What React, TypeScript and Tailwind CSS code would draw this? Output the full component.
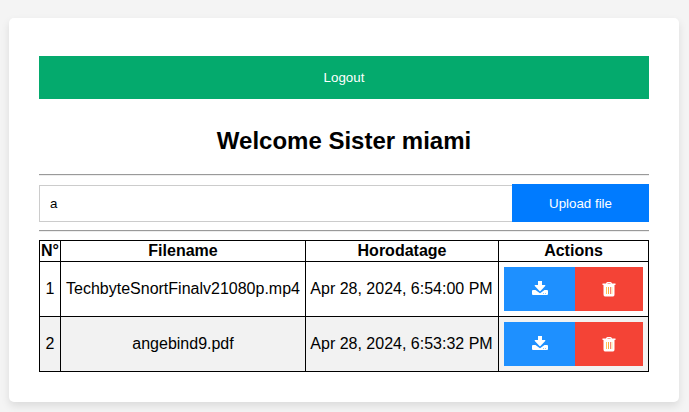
import React from "react";

interface FileRow {
  id: number;
  name: string;
  date: string;
}

const files: FileRow[] = [
  { id: 1, name: "TechbyteSnortFinalv21080p.mp4", date: "Apr 28, 2024, 6:54:00 PM" },
  { id: 2, name: "angebind9.pdf", date: "Apr 28, 2024, 6:53:32 PM" },
];

function DownloadIcon() {
  return (
    <svg viewBox="0 0 16 16" className="size-4" fill="currentColor" aria-hidden="true">
      <path d="M1 9h14q1 0 1 1v3q0 1-1 1H1q-1 0-1-1v-3q0-1 1-1z" />
      <path fill="#1e90ff" d="M3.500 9h9L8 12.200z" />
      <path d="M6 0h4v4h3q.7.3.2 1L8.500 10q-.5.5-1 0L2.800 5q-.5-.7.2-1h3z" />
      <path fill="#8fc8ff" d="M11 12h1v1h-1zM13 12h1v1h-1z" />
    </svg>
  );
}

function TrashIcon() {
  return (
    <svg viewBox="0 0 14 16" className="h-4 w-3.5" fill="currentColor" aria-hidden="true">
      <path d="M4 2.500Q4.200 1 5.500 1h3Q9.800 1 10 2.500h3.500V4H12.500v9.500Q12.500 15.500 11 15.500H3Q1.500 15.500 1.500 13.500V4H.5V2.500z" />
      <path fill="#f9877e" d="M5.500 2h3v.8h-3z" />
      <path fill="#ffc35c" d="M4 6h1v7H4z" />
      <path fill="#fbb03f" d="M6 6h1v7H6z" />
      <path fill="#f5837b" d="M8 6h1v7H8z" />
      <path fill="#ffd17b" d="M9.500 6h.8v7h-.8z" />
    </svg>
  );
}

function Divider() {
  return <hr className="h-0.5 border-0 border-t border-b border-t-[#9a9a9a] border-b-[#eeeeee]" />;
}

export default function App() {
  return (
    <div className="min-h-screen bg-[#f4f4f4] pt-[18px] pr-2.5 pb-2.5 pl-[9px] font-['Liberation_Sans',Arial,sans-serif] text-base text-black">
      <main className="h-[384px] rounded-[5px] bg-white px-[30px] pt-[38px] shadow-[0_4px_8px_rgba(0,0,0,0.1)]">
        <button className="block h-[43px] w-full bg-[#04aa6d] text-[13.333px] text-white">Logout</button>
        <h2 className="mt-[27px] mb-[19px] text-center text-2xl leading-[29px] font-bold">Welcome Sister miami</h2>
        <Divider />
        <form className="mt-2 mb-2 flex h-[38px] items-end" onSubmit={(e) => e.preventDefault()}>
          <input
            className="h-[37px] min-w-0 flex-1 border border-r-0 border-[#cccccc] bg-white px-2.5 text-[13.333px] outline-none"
            defaultValue="a"
            aria-label="File description"
          />
          <button className="h-[38px] w-[137px] bg-[#007bff] pt-0.5 text-[13.333px] text-white">Upload file</button>
        </form>
        <Divider />
        <table className="mt-2 w-full table-fixed border-separate border-spacing-0 border-t border-l border-black text-center leading-[18px]">
          <colgroup>
            <col className="w-[21px]" />
            <col className="w-[245px]" />
            <col className="w-[193px]" />
            <col className="w-[150px]" />
          </colgroup>
          <thead>
            <tr className="h-[21px]">
              {["N°", "Filename", "Horodatage", "Actions"].map((title) => (
                <th key={title} className="border-r border-b border-black p-0 font-bold">
                  {title}
                </th>
              ))}
            </tr>
          </thead>
          <tbody>
            {files.map((file) => (
              <tr key={file.id} className="h-[55px] even:bg-[#f2f2f2]">
                <td className="border-r border-b border-black p-0">{file.id}</td>
                <td className="border-r border-b border-black p-0">{file.name}</td>
                <td className="border-r border-b border-black p-0 pr-px">{file.date}</td>
                <td className="border-r border-b border-black p-[5px]">
                  <div className="flex h-11 text-white">
                    <button aria-label="Download" className="flex w-[71px] items-center justify-center bg-[#1e90ff]">
                      <DownloadIcon />
                    </button>
                    <button aria-label="Delete" className="flex flex-1 items-center justify-center bg-[#f44336]">
                      <TrashIcon />
                    </button>
                  </div>
                </td>
              </tr>
            ))}
          </tbody>
        </table>
      </main>
    </div>
  );
}
